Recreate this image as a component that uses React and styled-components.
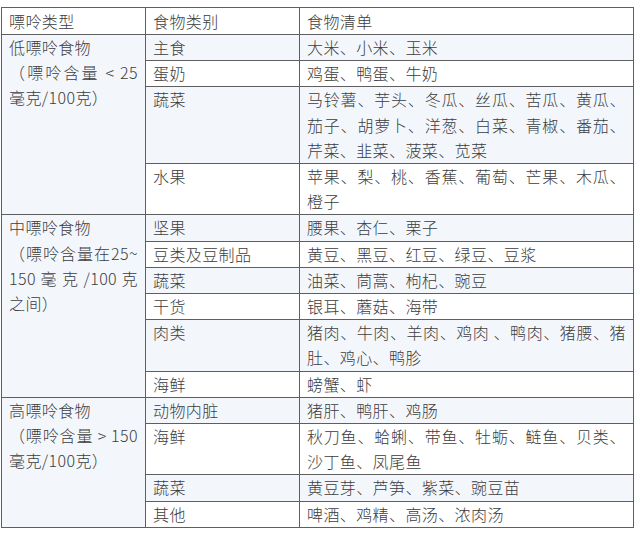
import React from "react";
import styled, { createGlobalStyle } from "styled-components";

const Global = createGlobalStyle`
  html, body {
    margin: 0;
    padding: 0;
    background: #ffffff;
  }
  body {
    font-family: "Noto Sans CJK SC", "Noto Sans", sans-serif;
    color: #3c3c3c;
  }
`;

const Page = styled.div`
  padding: 7px 0 0 1px;
  width: 640px;
  box-sizing: border-box;
`;

const Table = styled.table`
  width: 632px;
  table-layout: fixed;
  border-collapse: collapse;
  border: 1px solid #5f5f5f;
  font-size: 16px;
  font-weight: 300;
  letter-spacing: 0.4px;
  color: #3c3c3c;
`;

const HeadCell = styled.th`
  border: 1px solid #5f5f5f;
  background: #ffffff;
  font-weight: 300;
  text-align: left;
  line-height: 26px;
  padding: 0 7px;
  vertical-align: top;
`;

const Row = styled.tr`
  background: ${(p) => (p.$tint ? "#f3f7fc" : "#ffffff")};
`;

const Cell = styled.td`
  border: 1px solid #5f5f5f;
  line-height: 25.2px;
  padding: 0 7px;
  vertical-align: top;
  text-align: ${(p) => (p.$justify ? "justify" : "left")};
  background: ${(p) => (p.$tint ? "#f3f7fc" : "transparent")};
`;

const Line = styled.span`
  display: block;
  text-align: ${(p) => (p.$justify ? "justify" : "left")};
  text-align-last: ${(p) => (p.$justify ? "justify" : "left")};
  white-space: nowrap;
`;

const groups = [
  {
    lines: [
      ["低嘌呤食物", false],
      ["（嘌呤含量 < 25", true],
      ["毫克/100克）", false],
    ],
    rows: [
      ["主食", "大米、小米、玉米"],
      ["蛋奶", "鸡蛋、鸭蛋、牛奶"],
      ["蔬菜", "马铃薯、芋头、冬瓜、丝瓜、苦瓜、黄瓜、茄子、胡萝卜、洋葱、白菜、青椒、番茄、芹菜、韭菜、菠菜、苋菜"],
      ["水果", "苹果、梨、桃、香蕉、葡萄、芒果、木瓜、橙子"],
    ],
  },
  {
    lines: [
      ["中嘌呤食物", false],
      ["（嘌呤含量在25~", true],
      ["150 毫 克 /100 克", true],
      ["之间）", false],
    ],
    rows: [
      ["坚果", "腰果、杏仁、栗子"],
      ["豆类及豆制品", "黄豆、黑豆、红豆、绿豆、豆浆"],
      ["蔬菜", "油菜、茼蒿、枸杞、豌豆"],
      ["干货", "银耳、蘑菇、海带"],
      ["肉类", "猪肉、牛肉、羊肉、鸡肉 、鸭肉、猪腰、猪肚、鸡心、鸭胗"],
      ["海鲜", "螃蟹、虾"],
    ],
  },
  {
    lines: [
      ["高嘌呤食物", false],
      ["（嘌呤含量 > 150", true],
      ["毫克/100克）", false],
    ],
    rows: [
      ["动物内脏", "猪肝、鸭肝、鸡肠"],
      ["海鲜", "秋刀鱼、蛤蜊、带鱼、牡蛎、鲢鱼、贝类、沙丁鱼、凤尾鱼"],
      ["蔬菜", "黄豆芽、芦笋、紫菜、豌豆苗"],
      ["其他", "啤酒、鸡精、高汤、浓肉汤"],
    ],
  },
];

export default function App() {
  let index = 0;
  const body = [];
  groups.forEach((g, gi) => {
    g.rows.forEach(([cat, items], ri) => {
      const tint = index % 2 === 0;
      index += 1;
      body.push(
        <Row key={`${gi}-${ri}`} $tint={tint}>
          {ri === 0 && (
            <Cell rowSpan={g.rows.length} $tint>
              {g.lines.map(([text, just], li) => (
                <Line key={li} $justify={just}>
                  {text}
                </Line>
              ))}
            </Cell>
          )}
          <Cell>{cat}</Cell>
          <Cell $justify>{items}</Cell>
        </Row>
      );
    });
  });

  return (
    <>
      <Global />
      <Page>
        <Table>
          <colgroup>
            <col style={{ width: 144 }} />
            <col style={{ width: 154 }} />
            <col style={{ width: 334 }} />
          </colgroup>
          <thead>
            <tr>
              <HeadCell>嘌呤类型</HeadCell>
              <HeadCell>食物类别</HeadCell>
              <HeadCell>食物清单</HeadCell>
            </tr>
          </thead>
          <tbody>{body}</tbody>
        </Table>
      </Page>
    </>
  );
}
